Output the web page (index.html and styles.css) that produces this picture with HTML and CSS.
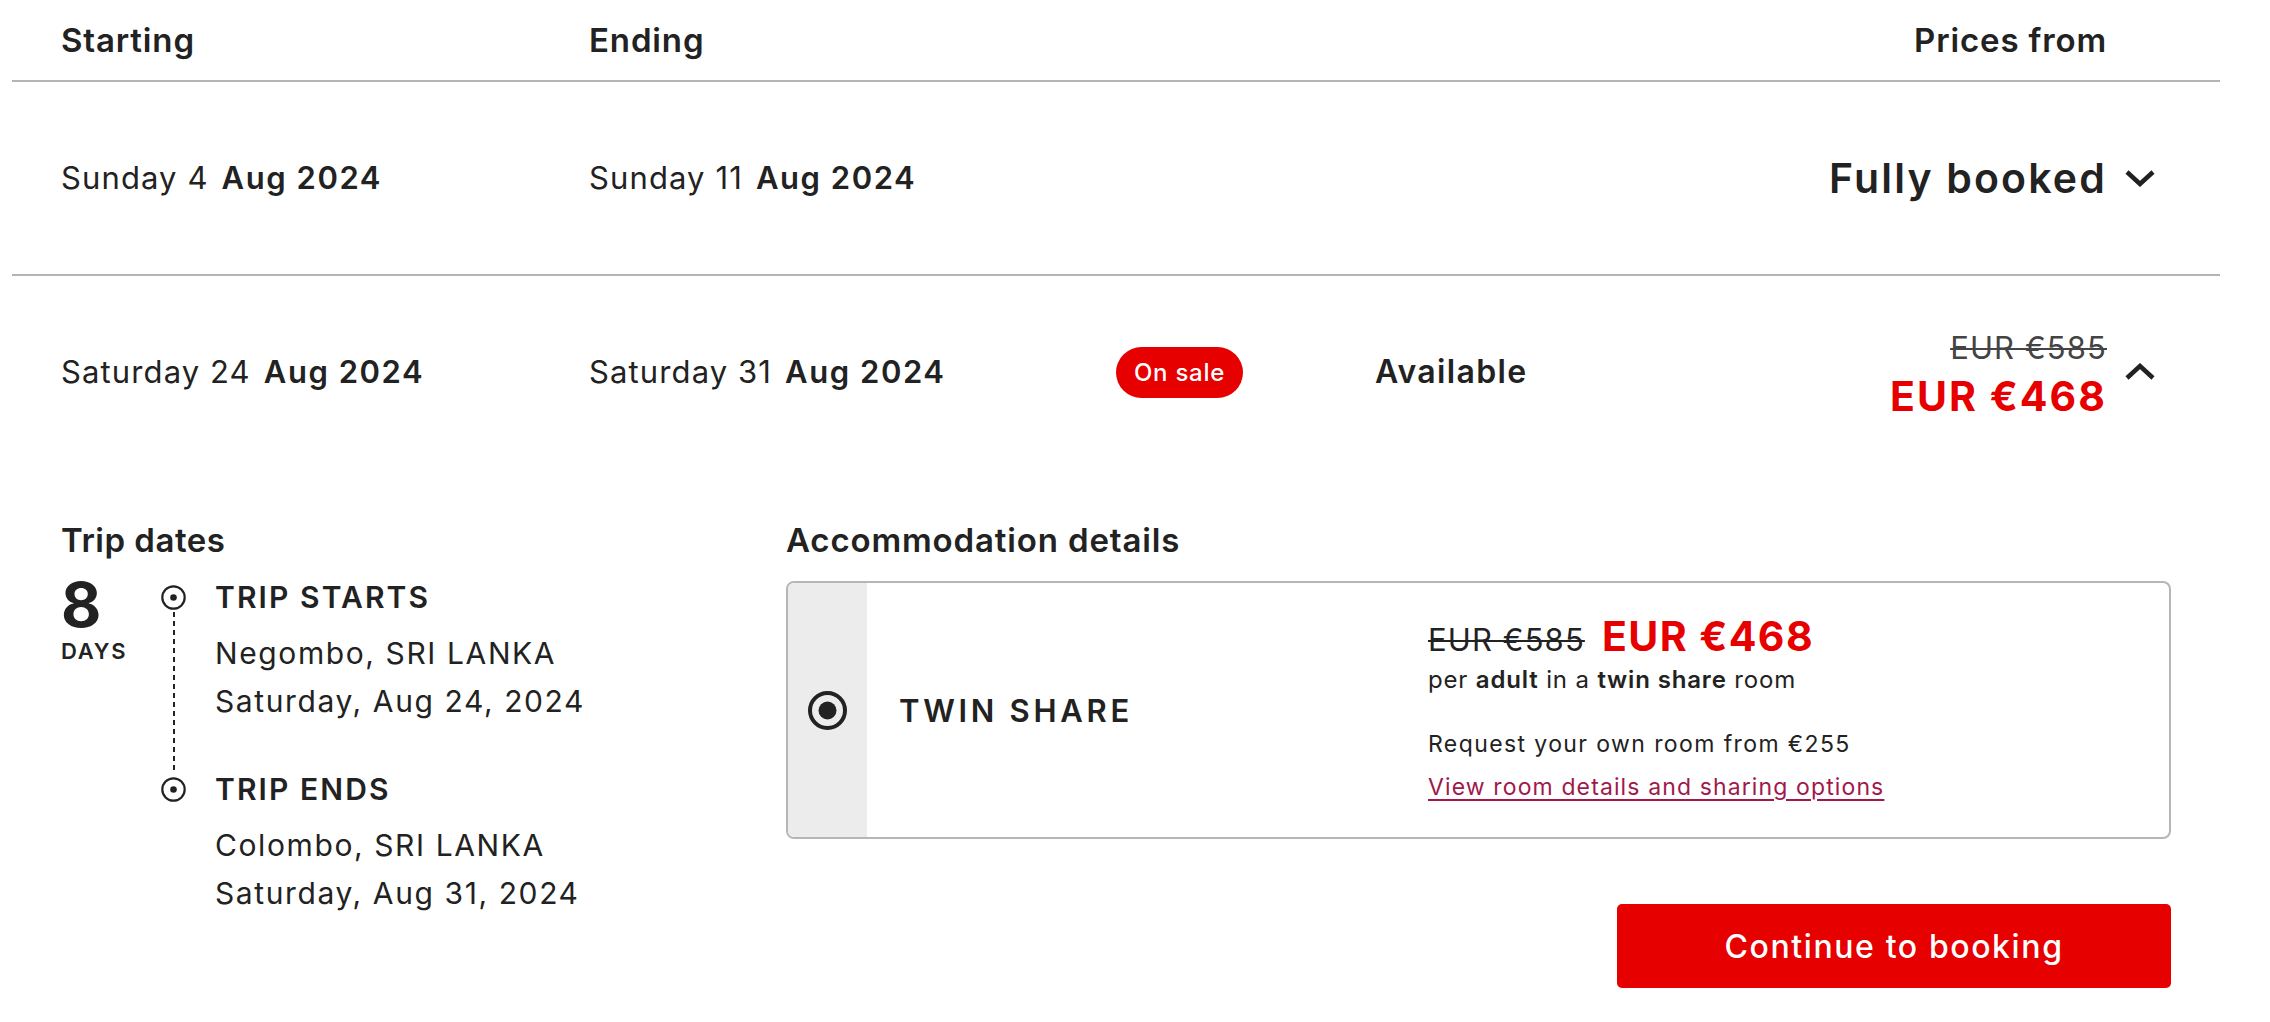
FILE: index.html
```html
<!DOCTYPE html>
<html lang="en">
<head>
<meta charset="utf-8">
<title>Departures</title>
<link rel="stylesheet" href="styles.css">
</head>
<body>
<div class="departures">
  <div class="row-grid head-row">
    <div class="col-start">Starting</div>
    <div class="col-end">Ending</div>
    <div class="col-price">Prices from</div>
  </div>

  <div class="row-grid dep-row bordered">
    <div class="col-start date"><span class="day">Sunday 4</span><span class="month">Aug 2024</span></div>
    <div class="col-end date"><span class="day">Sunday 11</span><span class="month">Aug 2024</span></div>
    <div class="col-price booked">Fully booked</div>
    <div class="col-chev">
      <svg class="chev" viewBox="0 0 32 18" width="32" height="18"><polyline points="3,3 16,15 29,3" fill="none" stroke="#222" stroke-width="4.5"/></svg>
    </div>
  </div>

  <div class="row-grid dep-row">
    <div class="col-start date"><span class="day">Saturday 24</span><span class="month">Aug 2024</span></div>
    <div class="col-end date"><span class="day">Saturday 31</span><span class="month">Aug 2024</span></div>
    <div class="col-badge"><span class="badge">On sale</span></div>
    <div class="col-status">Available</div>
    <div class="col-price price-block">
      <span class="price-was">EUR €585</span>
      <span class="price-now">EUR €468</span>
    </div>
    <div class="col-chev">
      <svg class="chev" viewBox="0 0 32 18" width="32" height="18"><polyline points="3,15 16,3 29,15" fill="none" stroke="#222" stroke-width="4.5"/></svg>
    </div>
  </div>

  <div class="details">
    <div class="trip">
      <h3 class="sec-title">Trip dates</h3>
      <div class="trip-body">
        <div class="days">
          <div class="days-num">8</div>
          <div class="days-lbl">DAYS</div>
        </div>
        <div class="stops">
          <div class="stop stop-first">
            <div class="marker">
              <svg class="ring" viewBox="0 0 25 25" width="25" height="25"><circle cx="12.5" cy="12.5" r="11.2" fill="none" stroke="#222" stroke-width="2.2"/><circle cx="12.5" cy="12.5" r="3.3" fill="#222"/></svg>
              <span class="dash"></span>
            </div>
            <div class="stop-text">
              <div class="stop-title">TRIP STARTS</div>
              <div class="stop-line">Negombo, SRI LANKA</div>
              <div class="stop-line">Saturday, Aug 24, 2024</div>
            </div>
          </div>
          <div class="stop">
            <div class="marker">
              <svg class="ring" viewBox="0 0 25 25" width="25" height="25"><circle cx="12.5" cy="12.5" r="11.2" fill="none" stroke="#222" stroke-width="2.2"/><circle cx="12.5" cy="12.5" r="3.3" fill="#222"/></svg>
            </div>
            <div class="stop-text">
              <div class="stop-title">TRIP ENDS</div>
              <div class="stop-line">Colombo, SRI LANKA</div>
              <div class="stop-line">Saturday, Aug 31, 2024</div>
            </div>
          </div>
        </div>
      </div>
    </div>

    <div class="accom">
      <h3 class="sec-title">Accommodation details</h3>
      <div class="room-card">
        <div class="room-select">
          <svg class="radio" viewBox="0 0 39 39" width="39" height="39"><circle cx="19.5" cy="19.5" r="17.5" fill="none" stroke="#222" stroke-width="4"/><circle cx="19.5" cy="19.5" r="9" fill="#222"/></svg>
        </div>
        <div class="room-name">TWIN SHARE</div>
        <div class="room-info">
          <div class="room-price"><span class="room-was">EUR €585</span><span class="room-now">EUR €468</span></div>
          <div class="room-per">per <b>adult</b> in a <b>twin share</b> room</div>
          <div class="room-own">Request your own room from €255</div>
          <a class="room-link" href="#">View room details and sharing options</a>
        </div>
      </div>
      <div class="actions">
        <button class="btn-continue" type="button">Continue to booking</button>
      </div>
    </div>
  </div>
</div>
</body>
</html>
```

FILE: styles.css
```css
* { box-sizing: border-box; }

html, body {
  margin: 0;
  padding: 0;
  background: #fff;
}

body {
  font-family: "Inter", "Open Sans", sans-serif;
  color: #222;
  letter-spacing: 1.12px;
}

.departures {
  margin-left: 12px;
  width: 2208px;
}

.row-grid {
  display: grid;
  grid-template-columns: 528px 527px 259px 1fr auto 49px;
  align-items: center;
  padding: 0 64px 0 49px;
}

.col-start { grid-column: 1; }
.col-end { grid-column: 2; }
.col-badge { grid-column: 3; }
.col-status { grid-column: 4; }
.col-price { grid-column: 5; text-align: right; }
.col-chev { grid-column: 6; display: flex; align-items: center; padding-left: 17px; }

.head-row {
  padding-top: 20px;
  padding-bottom: 20px;
  border-bottom: 2px solid #b4b4b4;
  font-size: 33px;
  line-height: 40px;
  font-weight: 600;
  letter-spacing: 0.026em;
}

.dep-row {
  height: 192px;
}

.dep-row.bordered {
  height: 194px;
  border-bottom: 2px solid #b4b4b4;
}

.date {
  font-size: 31px;
  line-height: 40px;
  white-space: nowrap;
}

.date .day { font-weight: 400; }
.date .month { font-weight: 600; margin-left: 13px; letter-spacing: 0.05em; }

.booked {
  font-size: 41px;
  line-height: 50px;
  font-weight: 600;
  letter-spacing: 0.053em;
}

.chev { display: block; }

.badge {
  display: inline-flex;
  align-items: center;
  justify-content: center;
  height: 51px;
  width: 127px;
  border-radius: 26px;
  background: #e60000;
  color: #fff;
  font-size: 24px;
  font-weight: 500;
  letter-spacing: 0.03em;
}

.col-status {
  font-size: 32px;
  line-height: 40px;
  font-weight: 600;
  letter-spacing: 0.042em;
}

.price-block {
  display: flex;
  flex-direction: column;
  align-items: flex-end;
  padding-top: 9px;
}

.price-was {
  font-size: 31px;
  line-height: 38px;
  color: #444;
  text-decoration: line-through;
  text-decoration-thickness: 2px;
}

.price-now {
  font-size: 41px;
  line-height: 58px;
  font-weight: 700;
  color: #e60000;
  letter-spacing: 0.05em;
}

/* details */
.details {
  display: grid;
  grid-template-columns: 725px 1fr;
  padding: 52px 49px 0 49px;
}

.sec-title {
  margin: 0;
  font-size: 33px;
  line-height: 40px;
  font-weight: 600;
  letter-spacing: 0.015em;
}

.accom .sec-title {
  letter-spacing: 0.026em;
}

.trip-body {
  display: flex;
  margin-top: 14px;
}

.days {
  width: 100px;
  flex: none;
}

.days-num {
  font-size: 62px;
  line-height: 62px;
  font-weight: 700;
  letter-spacing: 0;
}

.days-lbl {
  margin-top: 2px;
  font-size: 22px;
  line-height: 26px;
  font-weight: 600;
  letter-spacing: 0.08em;
}

.stops {
  padding-top: 5px;
}

.stop {
  display: grid;
  grid-template-columns: 25px 1fr;
  column-gap: 29px;
}

.stop-first .stop-text {
  padding-bottom: 46px;
}

.marker {
  display: flex;
  flex-direction: column;
  align-items: center;
  padding-top: 6px;
}

.ring { display: block; flex: none; }

.dash {
  flex: 1;
  width: 2px;
  margin-top: 2px;
  background: repeating-linear-gradient(to bottom, #222 0 5px, transparent 5px 9px);
}

.stop-title {
  font-size: 30px;
  line-height: 36px;
  font-weight: 600;
  margin-bottom: 14px;
  letter-spacing: 0.07em;
}

.stop-line {
  font-size: 30px;
  line-height: 48px;
  font-weight: 400;
  white-space: nowrap;
  letter-spacing: 1.6px;
}

.room-card {
  margin-top: 21px;
  height: 258px;
  border: 2px solid #b6b6b6;
  border-radius: 8px;
  overflow: hidden;
  display: grid;
  grid-template-columns: 79px 561px 1fr;
}

.room-select {
  background: #ececec;
  display: flex;
  align-items: center;
  justify-content: center;
}

.radio { display: block; }

.room-name {
  display: flex;
  align-items: center;
  padding-left: 32px;
  font-size: 31px;
  font-weight: 600;
  letter-spacing: 0.12em;
}

.room-info {
  display: flex;
  flex-direction: column;
  justify-content: center;
  align-items: flex-start;
  padding-bottom: 8px;
}

.room-price {
  display: flex;
  align-items: baseline;
  gap: 17px;
  line-height: 50px;
}

.room-was {
  font-size: 31px;
  font-weight: 400;
  color: #222;
  text-decoration: line-through;
  text-decoration-thickness: 2px;
}

.room-now {
  font-size: 41px;
  font-weight: 700;
  color: #e60000;
  letter-spacing: 0.035em;
}

.room-per {
  font-size: 24px;
  line-height: 30px;
  letter-spacing: 0.035em;
}

.room-per b { font-weight: 600; }

.room-own {
  margin-top: 34px;
  font-size: 23px;
  line-height: 30px;
  letter-spacing: 1.4px;
}

.room-link {
  margin-top: 13px;
  font-size: 23px;
  line-height: 30px;
  color: #a0184c;
  text-decoration: underline;
  text-decoration-thickness: 2px;
  text-underline-offset: 4px;
}

.actions {
  display: flex;
  justify-content: flex-end;
  margin-top: 65px;
}

.btn-continue {
  width: 554px;
  height: 84px;
  border: none;
  border-radius: 5px;
  background: #e60000;
  color: #fff;
  font-family: "Inter", "Open Sans", sans-serif;
  font-size: 32px;
  font-weight: 500;
  letter-spacing: 0.05em;
  cursor: pointer;
}
```
